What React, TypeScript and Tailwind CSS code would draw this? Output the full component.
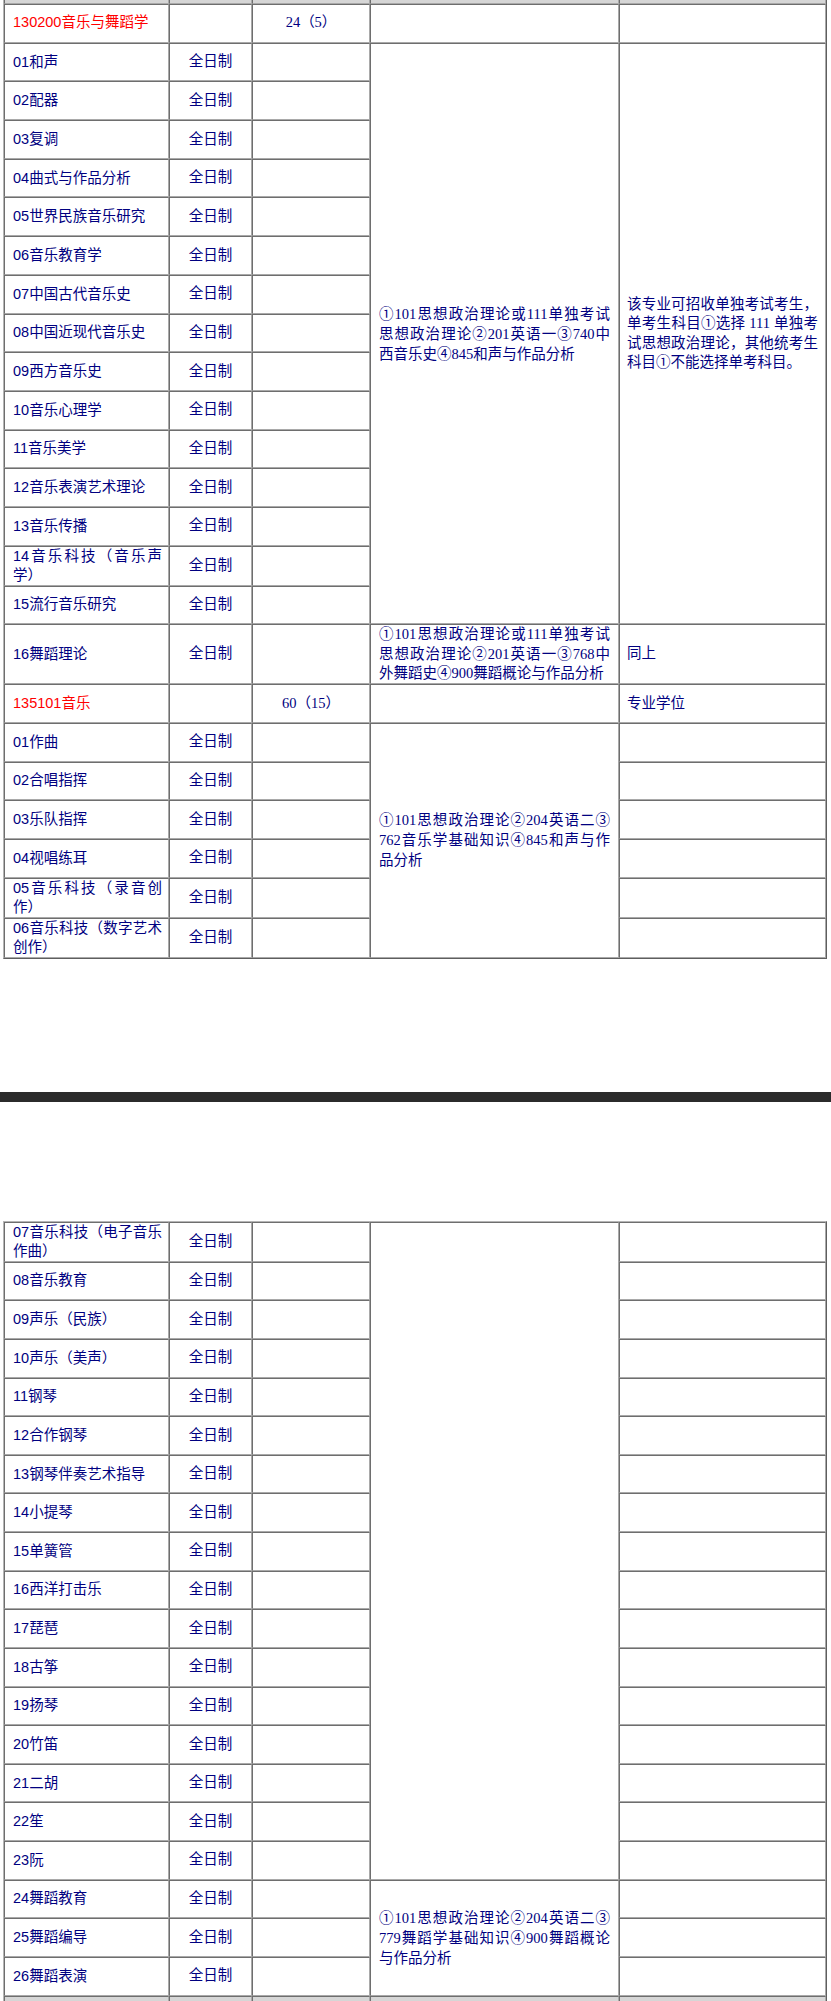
import React from 'react';

// shared cell look: old-style "border=1" table, dark top/left, light bottom/right
const cell =
  'border border-t-[#6e6e6e] border-l-[#6e6e6e] border-r-[#a9a9a9] border-b-[#a9a9a9] py-0 align-middle';
const sans = "font-['Liberation_Sans','Noto_Sans_CJK_SC',sans-serif]";
const serif = "font-['Liberation_Serif','Noto_Sans_CJK_SC',serif]";
const navy = 'text-[#000080]';

const Lines = ({ lines }: { lines: string[] }) => (
  <>
    {lines.map((l, i) => (
      <div key={i} className={i < lines.length - 1 ? 'text-justify [text-align-last:justify]' : ''}>
        {l}
      </div>
    ))}
  </>
);

const Cols = () => (
  <colgroup>
    <col className="w-[165px]" />
    <col className="w-[83px]" />
    <col className="w-[118px]" />
    <col className="w-[249px]" />
    <col className="w-[207px]" />
  </colgroup>
);

const NameCell = ({ name }: { name: string | string[] }) => (
  <td className={`${cell} ${sans} ${navy} pl-[8px] pr-[6px] leading-[19px]`}>
    {Array.isArray(name) ? <Lines lines={name} /> : name}
  </td>
);

const ModeCell = () => <td className={`${cell} ${sans} ${navy} text-center`}>全日制</td>;
const Empty = () => <td className={cell} />;

const Strip = ({ h, top }: { h: string; top?: boolean }) => (
  <tr className={h}>
    {[0, 1, 2, 3, 4].map((i) => (
      <td key={i} className={`${cell} bg-[#d6d6d6] ${top ? 'border-t-0' : 'border-b-0'}`} />
    ))}
  </tr>
);

const groupA = [
  '01和声',
  '02配器',
  '03复调',
  '04曲式与作品分析',
  '05世界民族音乐研究',
  '06音乐教育学',
  '07中国古代音乐史',
  '08中国近现代音乐史',
  '09西方音乐史',
  '10音乐心理学',
  '11音乐美学',
  '12音乐表演艺术理论',
  '13音乐传播',
];

const groupB: (string | string[])[] = [
  '01作曲',
  '02合唱指挥',
  '03乐队指挥',
  '04视唱练耳',
  ['05音乐科技（录音创', '作）'],
  ['06音乐科技（数字艺术', '创作）'],
];

const groupC = [
  '08音乐教育',
  '09声乐（民族）',
  '10声乐（美声）',
  '11钢琴',
  '12合作钢琴',
  '13钢琴伴奏艺术指导',
  '14小提琴',
  '15单簧管',
  '16西洋打击乐',
  '17琵琶',
  '18古筝',
  '19扬琴',
  '20竹笛',
  '21二胡',
  '22笙',
  '23阮',
];

const groupD = ['24舞蹈教育', '25舞蹈编导', '26舞蹈表演'];

const exam = `${cell} ${serif} ${navy} px-[8px] leading-[20px]`;
const note = `${cell} ${serif} ${navy} pl-[7px] pr-[7px] leading-[19.5px]`;

export default function App() {
  return (
    <div className="min-h-[2001px] bg-white text-[14.5px]">
      <div className="pl-[3px]">
        <table className="table-fixed w-[824px] border-separate border-spacing-0 border border-t-0 border-l-[#b5b5b5] border-r-[#5e5e5e] border-b-[#5e5e5e]">
          <Cols />
          <tbody>
            <Strip h="h-[4px]" top />
            <tr className="h-[38.7px]">
              <td className={`${cell} ${sans} text-[#ff0000] px-[8px]`}>130200音乐与舞蹈学</td>
              <Empty />
              <td className={`${cell} ${serif} ${navy} text-center`}>24（5）</td>
              <Empty />
              <Empty />
            </tr>
            {groupA.map((n, i) => (
              <tr key={n} className="h-[38.7px]">
                <NameCell name={n} />
                <ModeCell />
                <Empty />
                {i === 0 && (
                  <>
                    <td rowSpan={15} className={exam}>
                      <Lines
                        lines={[
                          '①101思想政治理论或111单独考试',
                          '思想政治理论②201英语一③740中',
                          '西音乐史④845和声与作品分析',
                        ]}
                      />
                    </td>
                    <td rowSpan={15} className={note}>
                      <Lines
                        lines={[
                          '该专业可招收单独考试考生，',
                          '单考生科目①选择 111 单独考',
                          '试思想政治理论，其他统考生',
                          '科目①不能选择单考科目。',
                        ]}
                      />
                    </td>
                  </>
                )}
              </tr>
            ))}
            <tr className="h-[40px]">
              <NameCell name={['14音乐科技（音乐声', '学）']} />
              <ModeCell />
              <Empty />
            </tr>
            <tr className="h-[38.7px]">
              <NameCell name="15流行音乐研究" />
              <ModeCell />
              <Empty />
            </tr>
            <tr className="h-[59.3px]">
              <NameCell name="16舞蹈理论" />
              <ModeCell />
              <Empty />
              <td className={`${cell} ${serif} ${navy} px-[8px] leading-[19.2px]`}>
                <Lines
                  lines={[
                    '①101思想政治理论或111单独考试',
                    '思想政治理论②201英语一③768中',
                    '外舞蹈史④900舞蹈概论与作品分析',
                  ]}
                />
              </td>
              <td className={note}>同上</td>
            </tr>
            <tr className="h-[39px]">
              <td className={`${cell} ${sans} text-[#ff0000] px-[8px]`}>135101音乐</td>
              <Empty />
              <td className={`${cell} ${serif} ${navy} text-center`}>60（15）</td>
              <Empty />
              <td className={note}>专业学位</td>
            </tr>
            {groupB.map((n, i) => (
              <tr key={i} className={Array.isArray(n) ? 'h-[40px]' : 'h-[38.7px]'}>
                <NameCell name={n} />
                <ModeCell />
                <Empty />
                {i === 0 && (
                  <td rowSpan={6} className={exam}>
                    <Lines
                      lines={[
                        '①101思想政治理论②204英语二③',
                        '762音乐学基础知识④845和声与作',
                        '品分析',
                      ]}
                    />
                  </td>
                )}
                <Empty />
              </tr>
            ))}
          </tbody>
        </table>
      </div>

      <div className="mt-[133px] h-[10px] w-full bg-[#2b2b2b]" />

      <div className="mt-[119px] pl-[3px]">
        <table className="table-fixed w-[824px] border-separate border-spacing-0 border border-b-0 border-t-[#b5b5b5] border-l-[#b5b5b5] border-r-[#5e5e5e]">
          <Cols />
          <tbody>
            <tr className="h-[39.7px]">
              <NameCell name={['07音乐科技（电子音乐', '作曲）']} />
              <ModeCell />
              <Empty />
              <td rowSpan={17} className={cell} />
              <Empty />
            </tr>
            {groupC.map((n) => (
              <tr key={n} className="h-[38.63px]">
                <NameCell name={n} />
                <ModeCell />
                <Empty />
                <Empty />
              </tr>
            ))}
            {groupD.map((n, i) => (
              <tr key={n} className="h-[38.63px]">
                <NameCell name={n} />
                <ModeCell />
                <Empty />
                {i === 0 && (
                  <td rowSpan={3} className={exam}>
                    <Lines
                      lines={[
                        '①101思想政治理论②204英语二③',
                        '779舞蹈学基础知识④900舞蹈概论',
                        '与作品分析',
                      ]}
                    />
                  </td>
                )}
                <Empty />
              </tr>
            ))}
            <Strip h="h-[5px]" />
          </tbody>
        </table>
      </div>
    </div>
  );
}
